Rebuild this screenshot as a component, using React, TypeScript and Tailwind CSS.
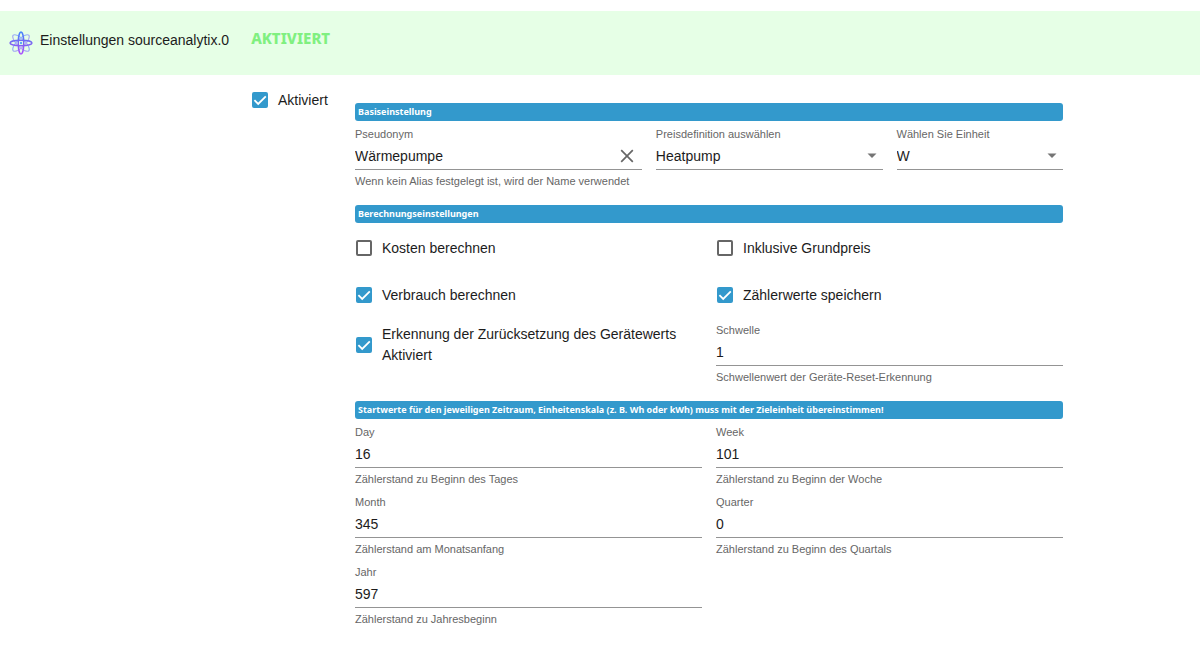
import { useState } from 'react'

function Logo() {
  return (
    <svg width="24" height="24" viewBox="0 0 48 48" fill="none" aria-hidden="true">
      <defs>
        <linearGradient id="logo" gradientUnits="userSpaceOnUse" x1="24" y1="0" x2="24" y2="48">
          <stop offset="0" stopColor="#3d86ff" />
          <stop offset="0.5" stopColor="#7a66f0" />
          <stop offset="1" stopColor="#b04cff" />
        </linearGradient>
        <linearGradient id="logo-soft" gradientUnits="userSpaceOnUse" x1="24" y1="6" x2="24" y2="42">
          <stop offset="0" stopColor="#86c5ff" />
          <stop offset="0.5" stopColor="#9aa6f5" />
          <stop offset="1" stopColor="#d9a5f7" />
        </linearGradient>
      </defs>
      <g stroke="url(#logo-soft)" strokeWidth="2.2">
        <ellipse cx="24" cy="24" rx="22" ry="8" transform="rotate(45 24 24)" />
        <ellipse cx="24" cy="24" rx="22" ry="8" transform="rotate(-45 24 24)" />
      </g>
      <g stroke="url(#logo)" strokeWidth="2.8">
        <ellipse cx="24" cy="24" rx="22" ry="5.5" />
        <ellipse cx="24" cy="24" rx="5.5" ry="22" />
      </g>
      <circle cx="24" cy="24" r="2.5" fill="#5fa8f8" />
    </svg>
  )
}

function SectionTitle(props: { text: string }) {
  return (
    <h2 className="rounded-[3px] bg-[#3399cc] px-[3px] font-['Noto_Sans',sans-serif] text-[9px] leading-[18px] font-bold text-white">
      {props.text}
    </h2>
  )
}

function Check(props: { id: string; label: string; checked?: boolean }) {
  const [on, setOn] = useState(!!props.checked)

  return (
    <div className="flex min-h-10 items-center gap-2.5 self-start py-0.5 pl-px">
      <span className="relative size-4 shrink-0">
        <input
          id={props.id}
          type="checkbox"
          checked={on}
          onChange={(e) => setOn(e.target.checked)}
          className="block size-4 appearance-none rounded-[2px] border-2 border-[#666666] bg-white checked:border-[#3399cc] checked:bg-[#3399cc]"
        />
        {on && (
          <svg className="pointer-events-none absolute inset-0" width="16" height="16" viewBox="0 0 16 16" fill="none">
            <path d="M2.4 8.2 6.2 12 13.8 4.4" stroke="white" strokeWidth="1.8" />
          </svg>
        )}
      </span>
      <label htmlFor={props.id} className="text-[14px] leading-[21px]">
        {props.label}
      </label>
    </div>
  )
}

function Field(props: { id: string; label: string; value: string; helper?: string; clearable?: boolean }) {
  const [value, setValue] = useState(props.value)

  return (
    <div className="flex flex-col">
      <label htmlFor={props.id} className="text-[11px] leading-4 text-[#666666]">
        {props.label}
      </label>
      <div className="flex h-7 items-center border-b border-[#949494]">
        <input
          id={props.id}
          type="text"
          value={value}
          onChange={(e) => setValue(e.target.value)}
          className="w-full min-w-0 flex-1 bg-transparent text-[14px] leading-5 outline-none"
        />
        {props.clearable && (
          <button type="button" aria-label="Löschen" onClick={() => setValue('')} className="px-2 text-[#666666]">
            <svg width="14" height="14" viewBox="0 0 14 14" fill="none">
              <path d="M1.2 1.2 12.8 12.8M12.8 1.2 1.2 12.8" stroke="currentColor" strokeWidth="1.7" />
            </svg>
          </button>
        )}
      </div>
      {props.helper && <p className="mt-[3px] text-[11px] leading-4 text-[#666666]">{props.helper}</p>}
    </div>
  )
}

function SelectField(props: { id: string; label: string; options: string[] }) {
  return (
    <div className="flex flex-col">
      <label htmlFor={props.id} className="text-[11px] leading-4 text-[#666666]">
        {props.label}
      </label>
      <div className="relative flex h-7 items-center border-b border-[#949494]">
        <select id={props.id} className="w-full appearance-none bg-transparent text-[14px] leading-5 outline-none">
          {props.options.map((opt) => (
            <option key={opt}>{opt}</option>
          ))}
        </select>
        <svg className="pointer-events-none absolute right-1.5" width="10" height="5" viewBox="0 0 10 5">
          <path d="M0.5 0.5h9L5 5z" fill="#757575" />
        </svg>
      </div>
    </div>
  )
}

export default function App() {
  return (
    <div className="bg-white font-['Liberation_Sans',Arial,sans-serif] text-[#1c1c1c]">
      <header className="mt-[11px] flex h-16 items-start bg-[#e6ffe6] pt-[18px] pl-[9px]">
        <div className="pt-0.5">
          <Logo />
        </div>
        <h1 className="pl-[7px] text-[14px] leading-[22px]">Einstellungen sourceanalytix.0</h1>
        <span className="pl-[22px] font-['Noto_Sans',sans-serif] text-[15px] leading-[18px] font-extrabold text-[#80f080]">
          AKTIVIERT
        </span>
      </header>

      <main className="flex items-start pt-[5px] pr-[137px] pb-9 pl-[251px]">
        <div className="w-[104px] shrink-0">
          <Check id="enabled" label="Aktiviert" checked />
        </div>

        <form className="flex min-w-0 flex-1 flex-col gap-4 pt-[23px]">
          <section className="flex flex-col gap-[5px]">
            <SectionTitle text="Basiseinstellung" />
            <div className="grid grid-cols-12 gap-x-3.5">
              <div className="col-span-5">
                <Field
                  id="alias"
                  label="Pseudonym"
                  value="Wärmepumpe"
                  helper="Wenn kein Alias festgelegt ist, wird der Name verwendet"
                  clearable
                />
              </div>
              <div className="col-span-4">
                <SelectField id="price" label="Preisdefinition auswählen" options={['Heatpump']} />
              </div>
              <div className="col-span-3">
                <SelectField id="unit" label="Wählen Sie Einheit" options={['W', 'Wh', 'kWh']} />
              </div>
            </div>
          </section>

          <section className="flex flex-col gap-[5px]">
            <SectionTitle text="Berechnungseinstellungen" />
            <div className="grid grid-cols-2 gap-x-3.5 gap-y-[7px]">
              <Check id="costs" label="Kosten berechnen" />
              <Check id="basic-price" label="Inklusive Grundpreis" />
              <Check id="consumption" label="Verbrauch berechnen" checked />
              <Check id="meter-values" label="Zählerwerte speichern" checked />
              <Check id="reset-detection" label="Erkennung der Zurücksetzung des Gerätewerts Aktiviert" checked />
              <Field id="threshold" label="Schwelle" value="1" helper="Schwellenwert der Geräte-Reset-Erkennung" />
            </div>
          </section>

          <section className="flex flex-col gap-[5px]">
            <SectionTitle text="Startwerte für den jeweiligen Zeitraum, Einheitenskala (z. B. Wh oder kWh) muss mit der Zieleinheit übereinstimmen!" />
            <div className="grid grid-cols-2 gap-x-3.5 gap-y-[7px]">
              <Field id="day" label="Day" value="16" helper="Zählerstand zu Beginn des Tages" />
              <Field id="week" label="Week" value="101" helper="Zählerstand zu Beginn der Woche" />
              <Field id="month" label="Month" value="345" helper="Zählerstand am Monatsanfang" />
              <Field id="quarter" label="Quarter" value="0" helper="Zählerstand zu Beginn des Quartals" />
              <Field id="year" label="Jahr" value="597" helper="Zählerstand zu Jahresbeginn" />
            </div>
          </section>
        </form>
      </main>
    </div>
  )
}
